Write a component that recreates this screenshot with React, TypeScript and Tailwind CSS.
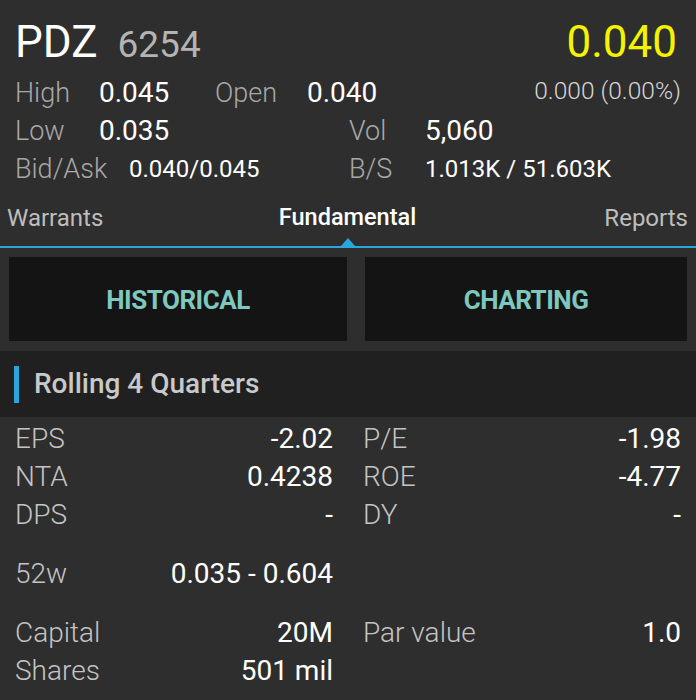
import React from 'react';

const font = { fontFamily: 'Roboto, "Noto Sans", sans-serif' };

type Pair = { label: string; value: string };

function StatRow({ left, right, className }: { left: Pair; right?: Pair; className?: string }) {
  return (
    <div className={`flex h-[38px] items-center text-[28px] ${className ?? ''}`}>
      <div className="flex w-[348px] items-center justify-between pl-[15px] pr-[15px]">
        <span className="font-light text-[#c4c4c4]">{left.label}</span>
        <span className="text-white">{left.value}</span>
      </div>
      {right && (
        <div className="flex w-[348px] items-center justify-between pl-[15px] pr-[15px]">
          <span className="font-light text-[#c4c4c4]">{right.label}</span>
          <span className="text-white">{right.value}</span>
        </div>
      )}
    </div>
  );
}

export default function App() {
  return (
    <div className="h-[700px] w-[696px] overflow-hidden bg-[#2e2e2e]" style={font}>
      {/* quote header */}
      <div className="flex h-[74px] items-end justify-between pb-[10px] pl-[15px] pr-[19px]">
        <div className="flex items-baseline gap-[20px] leading-none">
          <span className="text-[44px] text-white">PDZ</span>
          <span className="text-[37px] text-[#b4b4b4]">6254</span>
        </div>
        <span className="text-[44px] leading-none text-[#f4f400]">0.040</span>
      </div>

      <div className="flex h-[38px] items-center text-[27px] leading-none">
        <span className="w-[99px] pl-[15px] font-light text-[#a8a8a8]">High</span>
        <span className="w-[116px] text-[28px] text-white">0.045</span>
        <span className="w-[92px] font-light text-[#a8a8a8]">Open</span>
        <span className="text-[28px] text-white">0.040</span>
        <span className="ml-auto mb-[4px] pr-[15px] text-[24.5px] font-light text-[#d6d6d6]">0.000 (0.00%)</span>
      </div>
      <div className="flex h-[38px] items-center text-[27px] leading-none">
        <span className="w-[99px] pl-[15px] font-light text-[#a8a8a8]">Low</span>
        <span className="w-[250px] text-[28px] text-white">0.035</span>
        <span className="w-[76px] font-light text-[#a8a8a8]">Vol</span>
        <span className="text-[28px] text-white">5,060</span>
      </div>
      <div className="flex h-[38px] items-center leading-none">
        <span className="w-[129px] pl-[15px] text-[27px] font-light text-[#a8a8a8]">Bid/Ask</span>
        <span className="w-[220px] text-[24px] text-white">0.040/0.045</span>
        <span className="w-[76px] text-[27px] font-light text-[#a8a8a8]">B/S</span>
        <span className="text-[24px] text-white">1.013K / 51.603K</span>
      </div>

      {/* tabs */}
      <div className="relative mt-[10px] flex h-[50px] items-start border-b-2 border-[#2aa6de] pl-[7px] pr-[8px] pt-[2px] text-[24px]">
        <span className="flex-1 text-[#bdbdbd]">Warrants</span>
        <span className="text-[23.5px] font-medium text-white">Fundamental</span>
        <span className="flex-1 text-right text-[#bdbdbd]">Reports</span>
        <span className="absolute bottom-0 left-[341px] h-0 w-0 border-x-[7px] border-b-[8px] border-x-transparent border-b-[#2aa6de]" />
      </div>

      {/* buttons */}
      <div className="flex gap-[18px] pb-[9px] pl-[9px] pr-[9px] pt-[9px]">
        <div className="flex h-[84px] w-[338px] items-center justify-center bg-[#141414]">
          <span className="mt-[3px] text-[26px] font-bold tracking-[-0.5px] text-[#7ec8bd]">HISTORICAL</span>
        </div>
        <div className="flex h-[84px] flex-1 items-center justify-center bg-[#141414]">
          <span className="mt-[3px] text-[26px] font-bold tracking-[-0.5px] text-[#7ec8bd]">CHARTING</span>
        </div>
      </div>

      {/* section header */}
      <div className="mt-[1px] flex h-[66px] items-center gap-[15px] bg-[#202020] pl-[14px]">
        <span className="h-[37px] w-[5px] bg-[#2aa6de]" />
        <span className="text-[28px] font-medium text-[#c9c9c9]">Rolling 4 Quarters</span>
      </div>

      {/* fundamentals */}
      <div className="pt-[3px] leading-none">
        <StatRow left={{ label: 'EPS', value: '-2.02' }} right={{ label: 'P/E', value: '-1.98' }} />
        <StatRow left={{ label: 'NTA', value: '0.4238' }} right={{ label: 'ROE', value: '-4.77' }} />
        <StatRow left={{ label: 'DPS', value: '-' }} right={{ label: 'DY', value: '-' }} />
        <StatRow className="mt-[21px]" left={{ label: '52w', value: '0.035 - 0.604' }} />
        <StatRow className="mt-[21px]" left={{ label: 'Capital', value: '20M' }} right={{ label: 'Par value', value: '1.0' }} />
        <StatRow left={{ label: 'Shares', value: '501 mil' }} />
      </div>
    </div>
  );
}
